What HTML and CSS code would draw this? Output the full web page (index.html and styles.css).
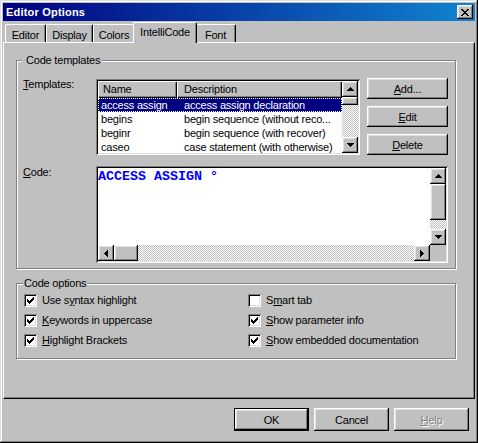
FILE: index.html
```html
<!DOCTYPE html>
<html lang="en">
<head>
    <meta charset="UTF-8">
    <title>Editor Options</title>
    <link rel="stylesheet" href="styles.css">
</head>
<body>
    <!-- pixel glyphs shared by scrollbars and checkboxes -->
    <svg class="defs" width="0" height="0" aria-hidden="true">
        <symbol id="arr-up" viewBox="0 0 7 4"><path d="M3 0h1v1H3zM2 1h3v1H2zM1 2h5v1H1zM0 3h7v1H0z"/></symbol>
        <symbol id="arr-down" viewBox="0 0 7 4"><path d="M0 0h7v1H0zM1 1h5v1H1zM2 2h3v1H2zM3 3h1v1H3z"/></symbol>
        <symbol id="arr-left" viewBox="0 0 4 7"><path d="M3 0h1v7H3zM2 1h1v5H2zM1 2h1v3H1zM0 3h1v1H0z"/></symbol>
        <symbol id="arr-right" viewBox="0 0 4 7"><path d="M0 0h1v7H0zM1 1h1v5H1zM2 2h1v3H2zM3 3h1v1H3z"/></symbol>
        <symbol id="check" viewBox="0 0 7 7"><path d="M0 2h1v3H0zM1 3h1v3H1zM2 4h1v3H2zM3 3h1v3H3zM4 2h1v3H4zM5 1h1v3H5zM6 0h1v3H6z"/></symbol>
        <symbol id="close-x" viewBox="0 0 8 7"><path d="M0 0h2v1H0zM6 0h2v1H6zM1 1h2v1H1zM5 1h2v1H5zM2 2h4v1H2zM3 3h2v1H3zM2 4h4v1H2zM1 5h2v1H1zM5 5h2v1H5zM0 6h2v1H0zM6 6h2v1H6z"/></symbol>
    </svg>

    <div class="window">
        <div class="titlebar">
            <span class="title">Editor Options</span>
            <span class="close raised"><svg width="8" height="7"><use href="#close-x"/></svg></span>
        </div>

        <div class="tabs">
            <div class="tab t-editor">Editor</div>
            <div class="tab t-display">Display</div>
            <div class="tab t-colors">Colors</div>
            <div class="tab t-intelli active">IntelliCode</div>
            <div class="tab t-font">Font</div>
        </div>

        <div class="panel">
            <fieldset class="group templates">
                <legend>Code templates</legend>
                <div class="tmpl-grid">
                    <label class="field-label"><u>T</u>emplates:</label>
                    <div class="listbox sunken">
                        <div class="list-main">
                            <div class="list-head">
                                <div class="head-cell name-col">Name</div>
                                <div class="head-cell desc-col">Description</div>
                            </div>
                            <div class="list-row selected"><span class="name-col">access assign</span><span class="desc-col">access assign declaration</span></div>
                            <div class="list-row"><span class="name-col">begins</span><span class="desc-col">begin sequence (without reco...</span></div>
                            <div class="list-row"><span class="name-col">beginr</span><span class="desc-col">begin sequence (with recover)</span></div>
                            <div class="list-row"><span class="name-col">caseo</span><span class="desc-col">case statement (with otherwise)</span></div>
                        </div>
                        <div class="vscroll">
                            <div class="sb-btn raised"><svg width="7" height="4"><use href="#arr-up"/></svg></div>
                            <div class="sb-thumb raised mini"></div>
                            <div class="sb-track"></div>
                            <div class="sb-btn raised"><svg width="7" height="4"><use href="#arr-down"/></svg></div>
                        </div>
                    </div>
                    <div class="side-buttons">
                        <button class="btn raised side"><u>A</u>dd...</button>
                        <button class="btn raised side"><u>E</u>dit</button>
                        <button class="btn raised side"><u>D</u>elete</button>
                    </div>

                    <label class="field-label code-label"><u>C</u>ode:</label>
                    <div class="codebox sunken">
                        <div class="code-text">ACCESS ASSIGN °</div>
                        <div class="vscroll">
                            <div class="sb-btn raised"><svg width="7" height="4"><use href="#arr-up"/></svg></div>
                            <div class="sb-thumb raised tall"></div>
                            <div class="sb-track"></div>
                            <div class="sb-btn raised"><svg width="7" height="4"><use href="#arr-down"/></svg></div>
                        </div>
                        <div class="hscroll">
                            <div class="sb-btn raised"><svg width="4" height="7"><use href="#arr-left"/></svg></div>
                            <div class="sb-thumb raised wide"></div>
                            <div class="sb-track"></div>
                            <div class="sb-btn raised"><svg width="4" height="7"><use href="#arr-right"/></svg></div>
                        </div>
                        <div class="sb-corner"></div>
                    </div>
                </div>
            </fieldset>

            <fieldset class="group options">
                <legend>Code options</legend>
                <div class="opt-grid">
                    <div class="check-row"><span class="checkbox sunken"><svg width="7" height="7"><use href="#check"/></svg></span><span>Use s<u>y</u>ntax highlight</span></div>
                    <div class="check-row"><span class="checkbox sunken"></span><span>S<u>m</u>art tab</span></div>
                    <div class="check-row"><span class="checkbox sunken"><svg width="7" height="7"><use href="#check"/></svg></span><span><u>K</u>eywords in uppercase</span></div>
                    <div class="check-row"><span class="checkbox sunken"><svg width="7" height="7"><use href="#check"/></svg></span><span><u>S</u>how parameter info</span></div>
                    <div class="check-row"><span class="checkbox sunken"><svg width="7" height="7"><use href="#check"/></svg></span><span><u>H</u>ighlight Brackets</span></div>
                    <div class="check-row"><span class="checkbox sunken"><svg width="7" height="7"><use href="#check"/></svg></span><span><u>S</u>how embedded documentation</span></div>
                </div>
            </fieldset>
        </div>

        <div class="footer">
            <button class="btn raised dlg default">OK</button>
            <button class="btn raised dlg">Cancel</button>
            <button class="btn raised dlg disabled"><u>H</u>elp</button>
        </div>
    </div>
</body>
</html>
```

FILE: styles.css
```css
* {
    margin: 0;
    padding: 0;
    box-sizing: border-box;
}

body {
    margin: 0;
    background-color: #c0c0c0;
    font-family: "Liberation Sans", Arial, sans-serif;
    font-size: 11px;
    letter-spacing: -0.2px;
    color: #000;
}

.defs {
    position: absolute;
    width: 0;
    height: 0;
}

svg {
    display: block;
    fill: #000;
}

/* 3D bevels */
.raised {
    background-color: #c0c0c0;
    box-shadow: inset -1px -1px #000, inset 1px 1px #fff, inset -2px -2px #808080, inset 2px 2px #dfdfdf;
}

.sunken {
    box-shadow: inset 1px 1px #808080, inset -1px -1px #fff, inset 2px 2px #000, inset -2px -2px #dfdfdf;
}

.window {
    width: 478px;
    height: 443px;
    padding: 3px;
    display: flex;
    flex-direction: column;
    background-color: #c0c0c0;
    box-shadow: inset -1px -1px #000, inset 1px 1px #dfdfdf, inset -2px -2px #808080, inset 2px 2px #fff;
}

.titlebar {
    height: 18px;
    flex: none;
    display: flex;
    align-items: center;
    padding-left: 3px;
    background: linear-gradient(to right, #000080, #1084d0);
    color: #fff;
    font-weight: bold;
    letter-spacing: 0.2px;
}

.title {
    flex: 1;
    line-height: 13px;
}

.close {
    width: 16px;
    height: 14px;
    margin-right: 2px;
    display: flex;
    align-items: center;
    justify-content: center;
}

/* tab strip */
.tabs {
    height: 21px;
    flex: none;
    display: flex;
    align-items: flex-end;
    padding-left: 2px;
}

.tab {
    height: 18px;
    padding-top: 4px;
    line-height: 13px;
    text-align: center;
    border-top: 1px solid #fff;
    border-left: 1px solid #fff;
    border-right: 1px solid #000;
    border-radius: 2px 2px 0 0;
    box-shadow: inset -1px 0 #808080;
    background-color: #c0c0c0;
}

.t-editor { width: 41px; }
.t-display { width: 47px; }
.t-colors { width: 42px; }
.t-intelli { width: 60px; }
.t-font { width: 41px; }

.tab.active {
    position: relative;
    z-index: 1;
    width: 64px;
    height: 21px;
    margin: 0 -2px -1px;
    padding-top: 3px;
}

.panel {
    height: 357px;
    flex: none;
    padding-left: 12px;
    border: 1px solid #fff;
    border-right-color: #000;
    border-bottom-color: #000;
    box-shadow: inset -1px -1px #808080;
}

/* group boxes */
.group {
    width: 440px;
    border: 1px solid #808080;
    box-shadow: inset 1px 1px #fff, 1px 1px #fff;
}

.group legend {
    line-height: 13px;
    background-color: #c0c0c0;
}

.templates {
    margin-top: 11px;
}

.templates legend {
    margin-left: 5px;
    padding: 0 2px 0 4px;
}

.options {
    margin-top: 8px;
}

.options legend {
    margin-left: 6px;
    padding: 0 1px;
}

.tmpl-grid {
    display: grid;
    grid-template-columns: 73px 271px 81px;
    row-gap: 11px;
    padding: 12px 7px 5px 6px;
}

.field-label {
    line-height: 13px;
    margin-top: -1px;
}

.code-label {
    margin-top: 0;
}

/* template list */
.listbox {
    width: 264px;
    height: 76px;
    padding: 2px;
    display: flex;
    background-color: #fff;
    overflow: hidden;
}

.list-main {
    flex: 1;
    overflow: hidden;
}

.list-head {
    display: flex;
    height: 17px;
}

.head-cell {
    height: 17px;
    line-height: 17px;
    background-color: #c0c0c0;
    box-shadow: inset 1px 1px #fff, inset -1px -1px #000, inset -2px -2px #808080;
    white-space: nowrap;
    overflow: hidden;
}

.head-cell.name-col {
    width: 79px;
    padding-left: 5px;
}

.head-cell.desc-col {
    flex: 1;
    padding-left: 7px;
}

.list-row {
    display: flex;
    height: 14px;
    line-height: 14px;
    white-space: nowrap;
}

.list-row .name-col {
    width: 78px;
    padding-left: 3px;
    overflow: hidden;
}

.list-row .desc-col {
    flex: 1;
    padding-left: 8px;
    overflow: hidden;
}

.list-row.selected {
    background-color: #000080;
    color: #fff;
    outline: 1px dotted #fff;
    outline-offset: -1px;
}

/* scrollbars */
.vscroll {
    width: 16px;
    display: flex;
    flex-direction: column;
}

.hscroll {
    height: 16px;
    display: flex;
}

.sb-btn {
    width: 16px;
    height: 16px;
    flex: none;
    display: flex;
    align-items: center;
    justify-content: center;
}

.sb-track {
    flex: 1;
    background: repeating-conic-gradient(#c0c0c0 0 25%, #fff 0 50%) 0 0 / 2px 2px;
}

.sb-thumb {
    flex: none;
}

.sb-thumb.mini { height: 8px; }
.sb-thumb.tall { height: 36px; }
.sb-thumb.wide { width: 24px; }

.sb-corner {
    background-color: #c0c0c0;
}

.side-buttons {
    display: flex;
    flex-direction: column;
    gap: 7px;
    margin-top: -1px;
}

.btn {
    border: none;
    font-family: inherit;
    font-size: 11px;
    letter-spacing: -0.2px;
    color: #000;
    text-align: center;
}

.btn.side {
    width: 81px;
    height: 21px;
}

/* code editor */
.codebox {
    grid-column: 2 / 4;
    width: 352px;
    height: 97px;
    padding: 2px;
    display: grid;
    grid-template-columns: 1fr 16px;
    grid-template-rows: 1fr 16px;
    background-color: #fff;
}

.code-text {
    padding-top: 1px;
    font-family: "Liberation Mono", "Courier New", monospace;
    font-size: 13.33px;
    font-weight: bold;
    line-height: 15px;
    letter-spacing: 0;
    color: #0000ff;
    white-space: pre;
}

/* options */
.opt-grid {
    display: grid;
    grid-template-columns: 224px 1fr;
    grid-auto-rows: 20px;
    padding: 4px 0 4px 7px;
}

.check-row {
    display: flex;
    align-items: flex-start;
    gap: 5px;
    line-height: 13px;
    white-space: nowrap;
}

.checkbox {
    width: 13px;
    height: 13px;
    padding: 3px;
    flex: none;
    background-color: #fff;
}

/* dialog buttons */
.footer {
    flex: 1;
    display: flex;
    justify-content: flex-end;
    align-items: flex-start;
    gap: 5px;
    padding: 9px 6px 0 0;
}

.btn.dlg {
    width: 75px;
    height: 23px;
}

.btn.default {
    border: 1px solid #000;
}

.btn.disabled {
    color: #808080;
    text-shadow: 1px 1px 0 #fff;
}
```
